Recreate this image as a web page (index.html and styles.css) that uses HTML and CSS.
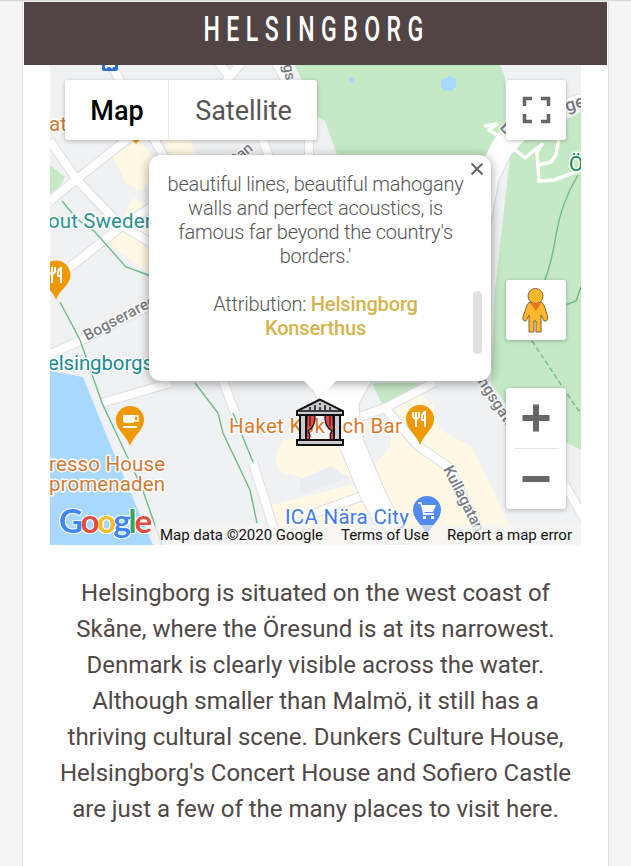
FILE: index.html
```html
<!DOCTYPE html>
<html lang="en">
<head>
<meta charset="utf-8">
<title>Helsingborg</title>
<link rel="stylesheet" href="styles.css">
</head>
<body>
<main class="card">
  <header class="title"><svg width="583" height="63" viewBox="24 2 583 63"><text class="title-text" transform="translate(203.5 41) scale(.66 1)" textLength="333" lengthAdjust="spacing">HELSINGBORG</text></svg></header>
  <section class="map">
    <svg class="tiles" viewBox="50 65 531 480">
      <rect x="50" y="65" width="531" height="480" fill="#f0f1f3"/>
      <g fill="#fef8e5">
        <path d="M113 157l24-18 30 32-27 20-14-8zM160 135h28l10 25h-26zM134 198l18 10v68l-45-34zM283 440q-14 22-2 32l22 6 26-10 28 12 3-2-14-42zM272 505l86-22 10 34-10 28h-80zM388 408l31-16 14 13 6 24 33 18 47 98H405l-36-74 22-25z"/>
      </g>
      <path fill="#e9ecf2" d="M300 480l30-14 20 12-50 17z"/>
      <g fill="#c5e8c5">
        <path d="M295 65h205l5 12v45l-20 35-20 40H352l-15-42-12-34-8-4-8-20z"/>
        <path d="M581 112v338l-14-7-62-40-14-20 4-93 16-142zM372 383h60l-49 23zM50 165l15 12-5 9-10 8z"/>
      </g>
      <path fill="#a9d8ff" d="M50 371l33 6 29 72 41 96H50zM441 80l9-4 6 3v8l-5 4-8-1-2-5zM349 77l5 1v5l-5-1z"/>
      <path class="road-edge" d="M50 201L77 179L130 137M50 141L77 180L118 223L151 243M60 275L117 230L151 207M107 58L166 160M242 62L221 87M218 62l12 15M262 138L270 160M309 135v25M50 354L80 341L151 305M102 403L170 383M222 378L235 413M253 463L279 545M352 420L387 407L435 382M385 408L418 446L450 468L485 545M310 515L365 495M506 123L581 98M273 58l20 35M565 485l20 35"/>
      <path class="road" d="M50 201L77 179L130 137M50 141L77 180L118 223L151 243M60 275L117 230L151 207M107 58L166 160M242 62L221 87M218 62l12 15M262 138L270 160M309 135v25M50 354L80 341L151 305M102 403L170 383M222 378L235 413M253 463L279 545M352 420L387 407L435 382M385 408L418 446L450 468L485 545M310 515L365 495M506 123L581 98M273 58l20 35M565 485l20 35"/>
      <path fill="#fff" stroke="#dadde1" d="M484 158l9-18 16-22 18 20-16 17-12 25-9 50-9 50zM308 380h64l-13 24 1 14 4 23 22 52 26 52h-25l-28-50-23-56z"/>
      <path fill="none" stroke="#fff" stroke-width="3.500" stroke-linejoin="round" d="M484 126l13-2-8 6 8 5M512 147l13 11 17-14-5 8 2 29 15-1 27-10M559 138l-3 17-5 7-13 3"/>
      <path class="path" d="M62 201l15 18 18 13 31 35 25 9M60 302l20 38 22 63 40 85 20 57M195 383l23 30 5 20 27 57 7 33M233 413l20 49M578 175q-17 28-22 60t-14 52M563 306l13-5 5-14"/>
      <path class="path dash" d="M532 341l44 66 5 6"/>
      <g><rect x="102" y="56" width="16" height="15" rx="2" fill="#2a6ed0"/><path fill="#fff" d="M105 61h10v6h-2l-1 2-2-2h-2l-2 2-1-2z"/></g>
      <g class="street">
        <text transform="translate(283 65) rotate(80)" font-size="15">gs</text>
        <text transform="translate(237 163) rotate(-38)" font-size="15">tan</text>
        <text transform="translate(87 341) rotate(-28)" font-size="15.500" textLength="80">Bogserareg</text>
        <text transform="translate(475 378) rotate(57)" font-size="15.500" textLength="62">ingsgata</text>
        <text transform="translate(443 469) rotate(63)" font-size="15.500" textLength="72">Kullagatan</text>
        <text transform="translate(567 112) rotate(-17)" font-size="18">ge</text>
        <text transform="translate(499 128) rotate(45)" font-size="17">L</text>
      </g>
      <g class="poi">
        <text x="49" y="131" fill="#cf7b35">at</text>
        <text x="48" y="228" fill="#299291" textLength="108">out Sweden</text>
        <text x="48" y="370" fill="#178c91" textLength="105">elsingborgs</text>
        <text x="49" y="471" fill="#cf7b35" textLength="116">resso House</text>
        <text x="49" y="491" fill="#cf7b35" textLength="116">promenaden</text>
        <text x="229" y="433" fill="#db7c2c" textLength="173">Haket Kök och Bar</text>
        <text x="285" y="524" fill="#427be4" textLength="124">ICA Nära City</text>
        <text x="569" y="171" fill="#188050">Ö</text>
      </g>
      <path fill="#e99500" d="M132 139h8l-4 5z"/>
      <g transform="translate(56 275)"><path class="pin orange" d="M0 25C-3 15-14.500 10-14.500 0a14.500 14.500 0 0 1 29 0C14.500 10 3 15 0 25z"/><path class="fork" d="M-7-8v5q3 4 6 0v-5M-4-8V8M5 8V-7q-4 2-3 8h3"/></g>
      <g transform="translate(420 419)"><path class="pin orange" d="M0 26C-3 16-14 10-14 0a14 14 0 0 1 28 0C14 10 3 16 0 26z"/><path class="fork" d="M-7-7v5q3 4 6 0v-5M-4-7V8M5 8V-7q-4 2-3 8h3"/></g>
      <g transform="translate(130 420)"><path class="pin orange" d="M0 26C-3 16-14 10-14 0a14 14 0 0 1 28 0C14 10 3 16 0 26z"/><path fill="#fff" d="M-7-5H5V1Q4 3 2 3h-6q-3 0-3-3zM-7 6H7v2H-7z"/><path fill="none" stroke="#fff" stroke-width="1.500" d="M5-4h3v5H5"/></g>
      <g transform="translate(427 510)"><path class="pin blue" d="M0 26C-3 16-14 10-14 0a14 14 0 0 1 28 0C14 10 3 16 0 26z"/><path fill="#fff" d="M-6-5H9L6 2h-9zM-4 3H7v2H-4zM-4 6h3v3h-3zM4 6h3v3H4z"/><path fill="none" stroke="#fff" stroke-width="1.500" d="M-9-7h3l3 11"/></g>
      <g transform="translate(296 398)">
        <path fill="#e5484f" stroke="#111" stroke-width="1.300" d="M11 17h8q1 11-7 16 3 4 1 9h-3zM37 17h-8q-1 11 7 16-3 4-1 9h3z"/>
        <path fill="none" stroke="#111" stroke-width="1" d="M14 18v10M34 18v10"/>
        <path fill="#c9cacf" stroke="#111" stroke-width="2" d="M24 1.500L1 13v4h46v-4zM4 17h6v25H4zM38 17h6v25h-6zM1 42h46v5H1z"/>
        <path fill="none" stroke="#111" stroke-width="1.500" d="M2 13h44M14 12V9M19 12V7M24 12V9M29 12V7M34 12V9M24 5v2"/>
      </g>
      <path fill="#f5f5f5" fill-opacity=".7" d="M155 525h426v20H155z"/>
      <text class="logo" x="59" y="533" textLength="93"><tspan fill="#4285f4">G</tspan><tspan fill="#e34b43">o</tspan><tspan fill="#f3bd2d">o</tspan><tspan fill="#4285f4">g</tspan><tspan fill="#35a65a">l</tspan><tspan fill="#e34b43">e</tspan></text>
      <g class="legal"><text x="160" y="540" textLength="163">Map data ©2020 Google</text><text x="341" y="540" textLength="88">Terms of Use</text><text x="447" y="540" textLength="125">Report a map error</text></g>
    </svg>
    <div class="types"><span class="type active">Map</span><span class="type">Satellite</span></div>
    <div class="controls">
      <div class="button"><svg width="60" height="60"><path fill="none" stroke="#666" stroke-width="3.500" d="M18.500 26v-7.500H26M35 18.500h7.500V26M42.500 34v7.500H35M26 41.500h-7.500V34"/></svg></div>
      <div class="button person"><svg width="60" height="60"><g fill="#fcb72b" stroke="#7b6540" stroke-width="1"><path d="M24 22h11q3 1 4 6l3 10q-1 4-4 3l-3-6v17h-5V41h-2v11h-5V35l-3 6q-4 0-3-4l3-9q1-5 4-6z"/><circle cx="29.500" cy="16" r="7.500"/></g><path fill="#e07a21" d="M24 23h11l-5 8z"/></svg></div>
      <div class="button zoom"><svg width="60" height="121"><path stroke="#666" stroke-width="6" d="M16.500 30h27M30 16.500v27M16.500 91h27"/><path stroke="#e6e6e6" d="M8 60.500h45"/></svg></div>
    </div>
    <article class="popup">
      <p>beautiful lines, beautiful mahogany<br>walls and perfect acoustics, is<br>famous far beyond the country's<br>borders.'</p>
      <p>Attribution: <b>Helsingborg<br>Konserthus</b></p>
      <svg class="close" width="14" height="14"><path stroke="#666" stroke-width="2" d="M1.500 1.500l11 11M12.500 1.500l-11 11"/></svg>
      <i class="scroll"></i>
    </article>
  </section>
  <p class="description">Helsingborg is situated on the west coast of<br>Skåne, where the Öresund is at its narrowest.<br>Denmark is clearly visible across the water.<br>Although smaller than Malmö, it still has a<br>thriving cultural scene. Dunkers Culture House,<br>Helsingborg's Concert House and Sofiero Castle<br>are just a few of the many places to visit here.</p>
</main>
</body>
</html>
```
FILE: styles.css
```css
* { box-sizing: border-box; }
body { margin: 0; height: 866px; overflow: hidden; padding: 0 22px; background: #f4f4f4; border-top: 1px solid #d6d6d6; font-family: Roboto, sans-serif; }
.card { height: 866px; background: #fff; border: 1px solid #ddd; border-top-color: #eee; }
.title { width: 583px; height: 63px; margin-left: 1px; background: #504544; }
.title svg { display: block; }
.title-text { font-size: 35px; fill: #fff; font-weight: 500; }
.map { position: relative; width: 531px; height: 480px; margin-left: 27px; overflow: hidden; }
.tiles { display: block; width: 531px; height: 480px; }
.road-edge, .road { fill: none; stroke: #dcdfe3; stroke-width: 10; stroke-linejoin: round; }
.road { stroke: #fff; stroke-width: 8; }
.path { fill: none; stroke: #70b98b; stroke-width: 1.4; }
.dash { stroke-dasharray: 5 3; }
.street { fill: #777b80; font-weight: 500; stroke: #fff; stroke-width: 2; paint-order: stroke; }
.poi { font-size: 20.5px; stroke: #fff; stroke-width: 3; paint-order: stroke; stroke-linejoin: round; }
.orange { fill: #ee9802; }
.blue { fill: #508bed; }
.fork { fill: none; stroke: #fff; stroke-width: 2; }
.logo { font: 700 33px Lato, sans-serif; filter: drop-shadow(1px 0 0 #fffc) drop-shadow(-1px 0 0 #fffc) drop-shadow(0 1px 0 #fffc) drop-shadow(0 -1px 0 #fffc); }
.legal { font-size: 15px; fill: #111; }
.types { position: absolute; left: 15px; top: 15px; height: 60px; display: flex; background: #fff; border-radius: 3px; box-shadow: 0 1px 4px #0004; }
.type { width: 148px; padding: 2px 0 0 1px; display: flex; align-items: center; justify-content: center; font-size: 27px; color: #555; }
.type.active { width: 104px; font-weight: 500; color: #000; border-right: 1px solid #e7e7e7; }
.controls { position: absolute; right: 15px; top: 15px; }
.button { width: 60px; height: 60px; background: #fff; border-radius: 3px; box-shadow: 0 1px 4px #0004; }
.button svg { display: block; }
.person { margin-top: 140px; }
.zoom { height: 121px; margin-top: 48px; }
.popup { position: absolute; left: 99px; top: 90px; width: 342px; height: 226px; padding: 17px 9px 0 0; background: #fff; border-radius: 12px; box-shadow: 0 2px 11px #0006; text-align: center; font-size: 20px; letter-spacing: -.24px; line-height: 24px; font-weight: 300; color: #555; }
.popup p { margin: 0 0 24px; white-space: nowrap; }
.popup b { font-weight: 500; letter-spacing: -.15px; color: #d4b44d; }
.popup::after { content: ""; position: absolute; left: 154px; top: 225px; border: 17px solid transparent; border-top-color: #fff; border-bottom: 0; }
.close { position: absolute; right: 7px; top: 7px; }
.scroll { position: absolute; right: 9px; top: 136px; width: 9px; height: 63px; border-radius: 5px; background: #e0e0e0; }
.description { margin: 30px 0 0; text-align: center; font-size: 24px; line-height: 36px; color: #4f4847; white-space: nowrap; }
```
